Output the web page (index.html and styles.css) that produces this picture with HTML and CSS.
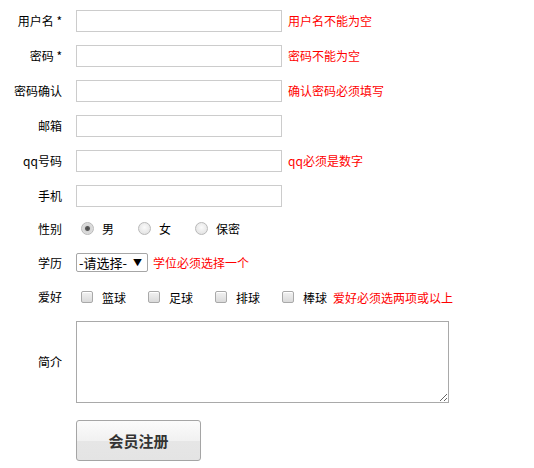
FILE: index.html
```html
<!DOCTYPE html>
<html lang="zh-CN">
<head>
    <meta charset="UTF-8">
    <title>会员注册</title>
    <link rel="stylesheet" href="styles.css">
</head>
<body>
    <form class="reg-form">
        <div class="row">
            <label class="lbl">用户名 *</label>
            <input type="text" class="txt">
            <span class="err">用户名不能为空</span>
        </div>
        <div class="row">
            <label class="lbl">密码 *</label>
            <input type="password" class="txt">
            <span class="err">密码不能为空</span>
        </div>
        <div class="row">
            <label class="lbl">密码确认</label>
            <input type="password" class="txt">
            <span class="err">确认密码必须填写</span>
        </div>
        <div class="row">
            <label class="lbl">邮箱</label>
            <input type="text" class="txt">
        </div>
        <div class="row">
            <label class="lbl">qq号码</label>
            <input type="text" class="txt">
            <span class="err">qq必须是数字</span>
        </div>
        <div class="row">
            <label class="lbl">手机</label>
            <input type="text" class="txt">
        </div>

        <div class="row row-sex">
            <label class="lbl">性别</label>
            <input type="radio" name="sex" class="rad" checked><span class="opt">男</span>
            <input type="radio" name="sex" class="rad"><span class="opt">女</span>
            <input type="radio" name="sex" class="rad"><span class="opt">保密</span>
        </div>

        <div class="row row-edu">
            <label class="lbl">学历</label>
            <span class="sel-wrap">
                <select class="sel">
                    <option>-请选择-</option>
                    <option>本科</option>
                    <option>硕士</option>
                </select>
            </span>
            <span class="err err-sel">学位必须选择一个</span>
        </div>

        <div class="row row-hobby">
            <label class="lbl">爱好</label>
            <input type="checkbox" class="chk"><span class="opt2">篮球</span>
            <input type="checkbox" class="chk"><span class="opt2">足球</span>
            <input type="checkbox" class="chk"><span class="opt2">排球</span>
            <input type="checkbox" class="chk"><span class="opt2 last">棒球</span>
            <span class="err err-hobby">爱好必须选两项或以上</span>
        </div>

        <div class="row row-intro">
            <label class="lbl">简介</label>
            <textarea class="intro"></textarea>
        </div>

        <div class="row row-btn">
            <span class="lbl"></span>
            <button type="button" class="btn">会员注册</button>
        </div>
    </form>
</body>
</html>
```

FILE: styles.css
```css
body {
    margin: 0;
    padding: 0;
    background: #fff;
    color: #000;
    font-family: "Noto Sans CJK SC", "DejaVu Sans", sans-serif;
    font-size: 12px;
}

.reg-form {
    padding-top: 3px;
}

.row {
    display: flex;
    align-items: center;
    height: 35px;
}

.lbl {
    width: 62px;
    margin-right: 14px;
    text-align: right;
    flex-shrink: 0;
    line-height: 16px;
}

.txt {
    box-sizing: border-box;
    width: 206px;
    height: 22px;
    margin: 0;
    padding: 2px 4px;
    border: 1px solid #cccccc;
    font-size: 12px;
    font-family: inherit;
    outline: none;
}

.err {
    color: #ff0000;
    margin-left: 6px;
    white-space: nowrap;
}

/* radio row */
.row-sex {
    height: 31px;
}

.rad {
    -webkit-appearance: none;
    appearance: none;
    box-sizing: border-box;
    width: 13px;
    height: 13px;
    margin: 0 8px 0 5px;
    border: 1px solid #b9b9b9;
    border-radius: 50%;
    background: radial-gradient(circle at 50% 40%, #fafafa 0, #e6e6e6 70%, #d8d8d8 100%);
}

.rad:checked {
    background: radial-gradient(circle, #4a4a4a 0, #5a5a5a 2px, #d4d4d4 3px, #e8e8e8 100%);
}

.opt {
    margin-right: 19px;
}

/* select row */
.row-edu {
    height: 37px;
}

.sel-wrap {
    position: relative;
    display: inline-block;
}

.sel-wrap::after {
    content: "\25BC";
    position: absolute;
    right: 6px;
    top: 3px;
    font-size: 9px;
    color: #000;
    pointer-events: none;
}

.sel {
    -webkit-appearance: none;
    appearance: none;
    box-sizing: border-box;
    width: 72px;
    height: 19px;
    margin: 0;
    padding: 0 0 0 2px;
    border: 1px solid #a6a6a6;
    border-radius: 2px;
    background: #fff;
    color: #000;
    font-family: inherit;
    font-size: 13px;
    line-height: 17px;
}

.err-sel {
    margin-left: 5px;
}

/* checkbox row */
.row-hobby {
    height: 32px;
}

.chk {
    -webkit-appearance: none;
    appearance: none;
    box-sizing: border-box;
    width: 12px;
    height: 12px;
    margin: 0 9px 0 5px;
    border: 1px solid #a9a9a9;
    border-radius: 2px;
    background: linear-gradient(#f2f2f2, #dadada);
    box-shadow: inset 0 1px 0 #fff;
}

.opt2 {
    margin-right: 17px;
}

.opt2.last {
    margin-right: 0;
}

.err-hobby {
    margin-left: 6px;
}

/* intro */
.row-intro {
    height: auto;
    padding: 8px 0;
}

.intro {
    box-sizing: border-box;
    width: 373px;
    height: 82px;
    margin: 0;
    border: 1px solid #a9a9a9;
    font-family: inherit;
    font-size: 12px;
}

/* submit */
.row-btn {
    height: auto;
    padding-top: 9px;
}

.btn {
    box-sizing: border-box;
    width: 125px;
    height: 41px;
    border: 1px solid #a5a5a5;
    border-radius: 3px;
    background: linear-gradient(#fbfbfb 0, #f1f1f1 50%, #e6e6e6 52%, #e4e4e4 100%);
    color: #333;
    font-family: inherit;
    font-size: 15px;
    font-weight: bold;
    cursor: pointer;
}
```
